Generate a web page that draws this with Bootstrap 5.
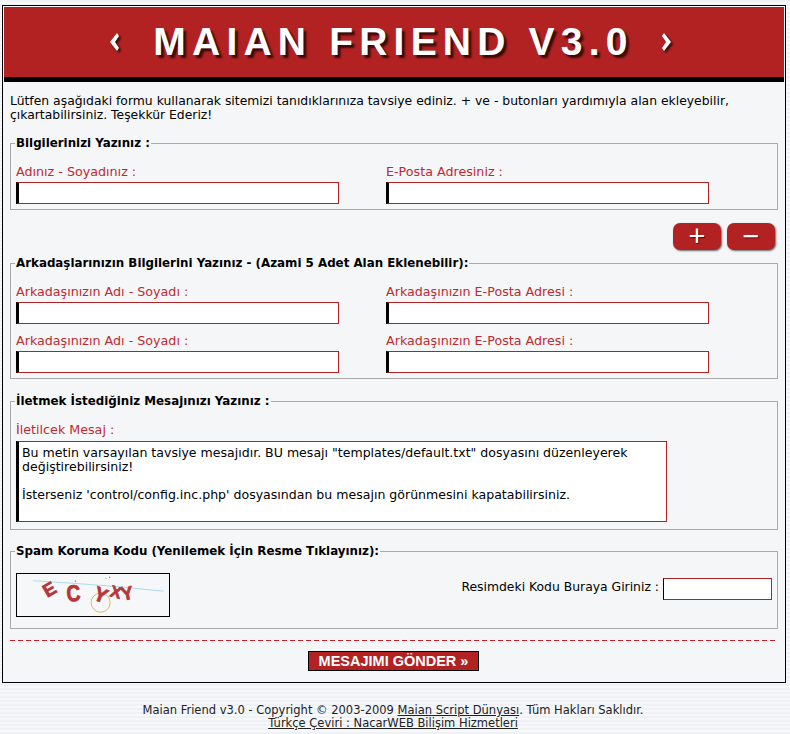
<!DOCTYPE html>
<html lang="tr">
<head>
<meta charset="utf-8">
<title>Maian Friend</title>
<link rel="stylesheet" href="https://cdn.jsdelivr.net/npm/bootstrap@5.3.0/dist/css/bootstrap.min.css">
<style>
html,body{height:100%}
body{margin:0;font-family:"DejaVu Sans",Verdana,sans-serif;font-size:12.38px;line-height:14px;color:#000;
  background:repeating-linear-gradient(180deg,#eef1f5 0,#eef1f5 2px,#f7f8fa 2px,#f7f8fa 4px);padding:5px 4px 0 2px}
.shell{border:1px solid #000;background:#f4f6f8;height:678px;padding:1px 0 0 1px;width:784px}
.banner{height:75px;background:#b22222;border-bottom:5px solid #000;color:#fff;margin-right:1px;column-gap:34px;padding-right:7px;
  font-family:"Liberation Sans",Arial,sans-serif;font-weight:700;font-size:39px;letter-spacing:6.2px;text-shadow:3px 3px 2px #3a0a0a;white-space:pre}
.banner span{margin-right:-6px}
.banner svg{filter:drop-shadow(2px 2px 1px #3a0a0a);flex:none}
.intro{margin:12px 0 0 6px;width:745px;line-height:14px}
.box{border:1px solid #aaa;margin:0 8px 0 6px;padding:0 5px;min-width:0;width:768px}
.box legend{float:none;width:auto;font-size:11.85px;line-height:14px;font-weight:700;margin:0 0 0 -1px;padding:0 1px}
.tag{color:#bf2a30;display:block;line-height:14px;margin:0 0 3px;font-size:12.7px}
.gridrow{width:740px;margin-top:15px}
.gridrow.nextrow{margin-top:10px}
.fld.form-control{display:block;border:1px solid #b22222;border-left:3px solid #000;border-radius:0;width:323px;height:22px;padding:0 2px;background:#fff;box-shadow:none}
.fld.short{width:109px;border-left-width:1px;border-left-color:#000;margin-top:5px}
.msg.form-control{border:1px solid #b22222;border-left:3px solid #000;border-radius:0;width:651px;height:81px;padding:4px 3px;font-family:inherit;font-size:12.55px;line-height:14px;color:#000;resize:none;overflow:hidden;box-shadow:none}
.box1{height:74px;margin-top:14px}
.box2{height:123px;margin-top:6px}
.box3{height:136px;margin-top:15px}
.box4{height:85px;margin-top:14px}
.pm.btn{width:48px;height:27px;padding:0;background:#b22222;border:0;border-radius:7px;color:#fff;font:400 29px/25px "Liberation Sans",Arial,sans-serif;box-shadow:1px 1px 2px #666;text-shadow:1px 1px 1px #600}
.pmrow{margin:13px 10px 0 0;height:27px;column-gap:6px}
.capt{width:154px;height:44px;border:1px solid #000;background:#f6f7f9;display:block;flex:none}
.capt text{font-family:"Liberation Sans",Arial,sans-serif;font-weight:700;fill:#b5373a;stroke:#b5373a;stroke-width:.8px;font-size:21px}
.capt text.sm{font-size:17px}
.capt text.md{font-size:19px}
.captrow{margin-top:15px}
.inlabel{margin:7px 4px 0 0}
.dash{margin:11px 0 0 6px;width:765px;height:1px;background:repeating-linear-gradient(90deg,#c8202a 0,#c8202a 5px,transparent 5px,transparent 8px)}
.sendwrap{width:779px}
.send.btn{width:171px;height:20px;padding:0;background:#b22222;border:1px solid #000;border-radius:0;color:#fff;font:700 14.5px/18px "Liberation Sans",Arial,sans-serif;margin-top:10px}
.foot{text-align:center;font-size:11.5px;line-height:13px;margin-top:21px;width:786px;margin-left:-2px;color:#222}
.foot a{color:#222;text-decoration:underline}
</style>
</head>
<body>
<div class="shell">
  <div class="banner d-flex justify-content-center align-items-center">
    <svg width="9" height="18" viewBox="0 0 9 18"><polygon points="7,0 9,3 5,9 9,15 7,18 0,9" fill="#fff"/></svg>
    <span>MAIAN FRIEND V3.0</span>
    <svg width="9" height="18" viewBox="0 0 9 18"><polygon points="2,0 0,3 4,9 0,15 2,18 9,9" fill="#fff"/></svg>
  </div>
  <p class="intro">Lütfen aşağıdaki formu kullanarak sitemizi tanıdıklarınıza tavsiye ediniz. + ve - butonları yardımıyla alan ekleyebilir, çıkartabilirsiniz. Teşekkür Ederiz!</p>
  <form onsubmit="return false">
    <fieldset class="box box1">
      <legend>Bilgilerinizi Yazınız :</legend>
      <div class="row g-0 gridrow">
        <div class="col-6"><label class="tag">Adınız - Soyadınız :</label><input class="form-control fld" type="text"></div>
        <div class="col-6"><label class="tag">E-Posta Adresiniz :</label><input class="form-control fld" type="text"></div>
      </div>
    </fieldset>
    <div class="pmrow d-flex justify-content-end">
      <button class="btn pm" type="button">+</button><button class="btn pm" type="button">−</button>
    </div>
    <fieldset class="box box2">
      <legend>Arkadaşlarınızın Bilgilerini Yazınız - (Azami 5 Adet Alan Eklenebilir):</legend>
      <div class="row g-0 gridrow">
        <div class="col-6"><label class="tag">Arkadaşınızın Adı - Soyadı :</label><input class="form-control fld" type="text"></div>
        <div class="col-6"><label class="tag">Arkadaşınızın E-Posta Adresi :</label><input class="form-control fld" type="text"></div>
      </div>
      <div class="row g-0 gridrow nextrow">
        <div class="col-6"><label class="tag">Arkadaşınızın Adı - Soyadı :</label><input class="form-control fld" type="text"></div>
        <div class="col-6"><label class="tag">Arkadaşınızın E-Posta Adresi :</label><input class="form-control fld" type="text"></div>
      </div>
    </fieldset>
    <fieldset class="box box3">
      <legend>İletmek İstediğiniz Mesajınızı Yazınız :</legend>
      <div class="gridrow"><label class="tag mb-1">İletilcek Mesaj :</label>
      <textarea class="form-control msg">Bu metin varsayılan tavsiye mesajıdır. BU mesajı "templates/default.txt" dosyasını düzenleyerek değiştirebilirsiniz!

İsterseniz 'control/config.inc.php' dosyasından bu mesajın görünmesini kapatabilirsiniz.</textarea></div>
    </fieldset>
    <fieldset class="box box4">
      <legend>Spam Koruma Kodu (Yenilemek İçin Resme Tıklayınız):</legend>
      <div class="d-flex justify-content-between align-items-start captrow">
        <svg class="capt" viewBox="0 0 154 44">
          <polyline points="14,7 60,10 100,13 151,18" fill="none" stroke="#a8d8ec" stroke-width="1"/>
          <circle cx="85" cy="30" r="10" fill="none" stroke="#f0b050" stroke-width="1"/>
          <text class="md" transform="translate(29,25) rotate(-30)">E</text>
          <text transform="translate(50,29) rotate(-5) scale(.95,1.15)">C</text>
          <text transform="translate(76,26) rotate(22)">Y</text>
          <text class="sm" transform="translate(94,23) rotate(15)">X</text>
          <text class="md" transform="translate(108,28) rotate(-12)">Y</text>
          <rect x="58" y="7" width="1" height="1" fill="#336"/><rect x="94" y="3" width="1" height="1" fill="#822"/><rect x="90" y="4" width="1" height="1" fill="#6aa"/><rect x="107" y="13" width="1" height="1" fill="#336"/>
        </svg>
        <div class="d-flex align-items-start"><span class="inlabel">Resimdeki Kodu Buraya Giriniz :</span><input class="form-control fld short" type="text"></div>
      </div>
    </fieldset>
    <div class="dash"></div>
    <div class="d-flex justify-content-center sendwrap"><button class="btn send" type="button">MESAJIMI GÖNDER »</button></div>
  </form>
</div>
<p class="foot">Maian Friend v3.0 - Copyright © 2003-2009 <a href="#">Maian Script Dünyası</a>. Tüm Hakları Saklıdır.<br><a href="#">Türkçe Çeviri : NacarWEB Bilişim Hizmetleri</a></p>
</body>
</html>
